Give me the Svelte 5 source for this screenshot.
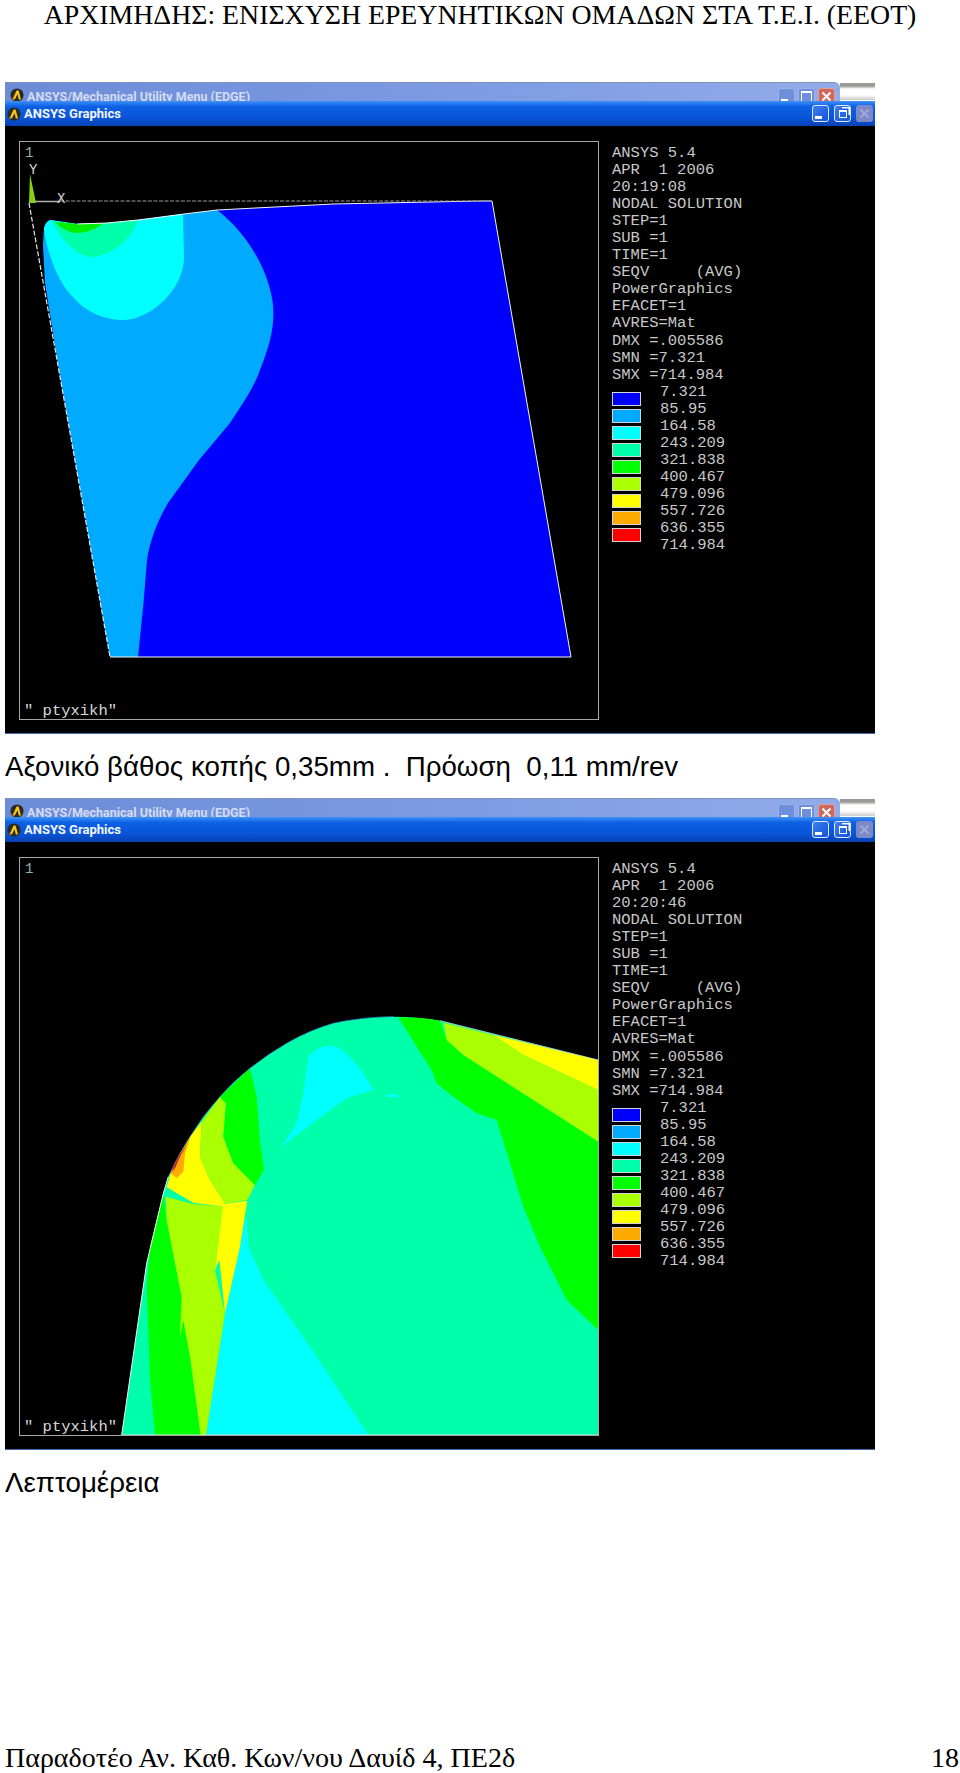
<script>
    const readout = ["STEP=1", "SUB =1", "TIME=1", "SEQV     (AVG)", "PowerGraphics", "EFACET=1", "AVRES=Mat", "DMX =.005586", "SMN =7.321", "SMX =714.984"];
    const labels = ["7.321", "85.95", "164.58", "243.209", "321.838", "400.467", "479.096", "557.726", "636.355", "714.984"];
    const swatches = ["#0000ff", "#00aaff", "#00ffff", "#00ffaa", "#00ff00", "#aaff00", "#ffff00", "#ffaa00", "#ff0000"];

    const windows = [
        { time: "20:19:08", caption: "Αξονικό βάθος κοπής 0,35mm .  Πρόωση  0,11 mm/rev" },
        { time: "20:20:46", caption: "Λεπτομέρεια" },
    ];

    function linesFor(win) {
        return ["ANSYS 5.4", "APR  1 2006", win.time, "NODAL SOLUTION", ...readout];
    }
</script>

{#snippet logo()}
    <svg class="logo" viewBox="0 0 14 14">
        <circle cx="7" cy="7" r="6.6" fill="#2b2a20" />
        <path d="M2.5 11.5 L6.6 2.6 L8.6 2.6 L11 11.5 L8.8 11.5 L7.6 6.2 L4.8 11.5 Z" fill="#f4c81c" />
        <path d="M1.8 9.5 L3.6 9.5 L2.8 12 Z" fill="#c8401c" />
    </svg>
{/snippet}

{#snippet cross()}
    <svg class="cross" viewBox="0 0 11 11">
        <path d="M1.5 1.5 L9.5 9.5 M9.5 1.5 L1.5 9.5" />
    </svg>
{/snippet}

{#snippet firstPlot()}
    <svg class="plot" viewBox="20 142 578 577">
        <path d="M50 220 Q46 221 44 228 L43 245 L45 283 L59 370 L110 657 L571 657 L492 201 L480 201 L333 204 L217 210 L184 214 L138 220 L107 223 L77 224 Z" fill="#0000ff" />
        <path d="M50 220 Q46 221 44 228 L43 245 L45 283 L59 370 L110 657 L138 657 L143.5 603 L147 560 C150 540 158 520 168 503 L199 460 L230 423 C245 400 255 385 260 370 C270 345 275 325 273 305 C270 275 250 235 217 210 L184 214 L138 220 L107 223 L77 224 Z" fill="#00aaff" />
        <path d="M45 237 C50 260 60 285 73 297 C85 312 105 320 123 320 C150 320 184 290 184 257 L183 214 L138 220 L107 223 L77 224 L50 220 Q46 222 44 228 Z" fill="#00ffff" />
        <path d="M52 221 L77 224 L107 223 L138 220 C134 232 127 240 118 247 C108 254 98 257 90 257 C78 255 62 243 52 221 Z" fill="#00ffaa" />
        <path d="M55 222 L77 224 L103 223 C98 228 90 232 78 233 C70 233 60 228 55 222 Z" fill="#00ee00" />
        <path d="M77 224 L107 223 L138 220 L184 214 L217 210 L333 204 L480 201 L492 201 L571 657 L110 657" fill="none" stroke="#f4f4f4" stroke-width="1" />
        <path d="M29 203 L110 657" fill="none" stroke="#e8e8e8" stroke-width="1.2" stroke-dasharray="5 2" />
        <path d="M60 201 L492 201" fill="none" stroke="#9a9a9a" stroke-width="1" stroke-dasharray="4 1.5" />
        <path d="M29 201.5 L60 201.5" stroke="#b0b0b0" stroke-width="1.5" />
        <path d="M30 174 L29 203 L36 203 Z" fill="#86d018" />
        <text class="axis one" x="25" y="157">1</text>
        <text class="axis" x="29" y="174">Y</text>
        <text class="axis" x="57" y="203">X</text>
        <text class="note" x="24" y="715">" ptyxikh"</text>
    </svg>
{/snippet}

{#snippet secondPlot()}
    <svg class="plot" viewBox="-240 -366 1734 1731">
        <path d="M65 1365 L140 850 L190 640 L205 590 Q235 525 270 470 Q310 405 360 350 Q405 300 450 265 Q500 225 560 190 Q630 150 700 130 Q790 110 880 110 Q950 110 1020 122 L1495 240 L1495 1365 Z" fill="#00ffaa" />
        <path d="M895 112 Q960 112 1020 122 L1040 180 L1090 225 L1495 485 L1495 1050 L1400 960 L1320 800 L1270 680 L1190 420 L1130 400 L1060 350 L1010 310 L995 270 L950 200 Z" fill="#00ff00" />
        <path d="M1030 128 L1180 165 L1270 225 L1495 330 L1495 485 L1090 225 L1040 180 Z" fill="#aaff00" />
        <path d="M1180 165 L1495 240 L1495 330 L1270 225 Z" fill="#ffff00" />
        <path d="M545 500 L590 430 L610 340 L625 230 Q670 180 720 205 Q770 240 820 330 L740 355 L650 420 Z" fill="#00ffff" />
        <path d="M850 345 L880 342 L905 350 L870 352 Z" fill="#00ffff" />
        <path d="M440 700 L445 800 L490 900 L560 1000 L650 1130 L805 1365 L318 1365 L375 1000 L420 800 Z" fill="#00ffff" />
        <path d="M190 640 L200 720 L225 850 L245 950 L250 1020 L270 1130 L302 1365 L165 1365 L150 1200 L145 1050 L140 920 L150 800 Z" fill="#00ff00" />
        <path d="M197 650 L280 672 L370 680 L345 870 L375 1000 L318 1365 L302 1365 L270 1130 L250 1020 L240 1070 L245 950 L225 850 L200 720 Z" fill="#aaff00" />
        <path d="M370 672 L442 662 L420 800 L375 1000 L358 840 L345 870 Z" fill="#ffff00" />
        <path d="M200 622 L215 570 Q240 520 270 470 L305 425 L300 530 L330 600 L375 670 L370 680 L280 668 Z" fill="#ffff00" />
        <path d="M305 425 L360 350 L378 370 L370 470 L400 550 L465 615 L442 660 L390 668 L375 670 L330 600 L300 530 Z" fill="#aaff00" />
        <path d="M360 350 L450 265 L470 350 L480 480 L492 570 L465 615 L400 550 L370 470 L378 370 Z" fill="#00ff00" />
        <path d="M272 468 L255 520 L250 575 L230 595 L212 580 L240 520 Z" fill="#ffaa00" />
        <path d="M262 490 L240 530 L225 565 L212 578 L225 545 Z" fill="#d81818" />
        <path d="M65 1365 L140 850 L190 640 L205 590" fill="none" stroke="#f0f0f0" stroke-width="3" />
        <path d="M205 590 Q235 525 270 470 Q310 405 360 350 Q405 300 450 265 Q500 225 560 190 Q630 150 700 130 Q790 110 880 110" fill="none" stroke="#2f8fd0" stroke-width="2" />
        <path d="M1020 122 L1495 240" fill="none" stroke="#e8e8e8" stroke-width="2" />
        <path d="M65 1365 L1495 1365" fill="none" stroke="#bfe8e0" stroke-width="3" />
        <text class="axis one big" x="-225" y="-321">1</text>
        <text class="note big" x="-228" y="1353">" ptyxikh"</text>
    </svg>
{/snippet}

<div class="page">
    <header class="doc-title">ΑΡΧΙΜΗΔΗΣ: ΕΝΙΣΧΥΣΗ ΕΡΕΥΝΗΤΙΚΩΝ ΟΜΑΔΩΝ ΣΤΑ Τ.Ε.Ι. (ΕΕΟΤ)</header>

    {#each windows as win, i}
        <section class="window">
            <div class="back-row">
                <div class="back-bar">
                    {@render logo()}
                    <span class="back-title">ANSYS/Mechanical Utility Menu (EDGE)</span>
                    <span class="btn blue"><i class="min"></i></span>
                    <span class="btn blue"><i class="max"></i></span>
                    <span class="btn red">{@render cross()}</span>
                </div>
                <div class="back-strip"></div>
            </div>
            <div class="front-bar">
                {@render logo()}
                <span class="front-title">ANSYS Graphics</span>
                <span class="btn bright"><i class="min"></i></span>
                <span class="btn bright"><i class="restore"></i></span>
                <span class="btn faded">{@render cross()}</span>
            </div>
            <div class="body">
                <div class="frame">
                    {#if i === 0}
                        {@render firstPlot()}
                    {:else}
                        {@render secondPlot()}
                    {/if}
                </div>
                <div class="side">
                    {#each linesFor(win) as line}
                        <div class="line">{line}</div>
                    {/each}
                    {#each labels as label, n}
                        <div class="legend-row">
                            <span class="swatch-slot">
                                {#if swatches[n]}
                                    <span class="swatch" style="background: {swatches[n]}"></span>
                                {/if}
                            </span>
                            <span>{label}</span>
                        </div>
                    {/each}
                </div>
            </div>
        </section>
        <p class="caption">{win.caption}</p>
    {/each}

    <footer class="doc-footer">
        <span>Παραδοτέο Αν. Καθ. Κων/νου Δαυίδ 4, ΠΕ2δ</span>
        <span>18</span>
    </footer>
</div>

<style>
    :global(body) {
        margin: 0;
        background: #fff;
    }

    .page {
        height: 1773px;
        display: flex;
        flex-direction: column;
        overflow: hidden;
        color: #000;
    }

    .doc-title {
        height: 82px;
        flex: none;
        text-align: center;
        font-family: "Liberation Serif", serif;
        font-size: 27.8px;
        line-height: 30px;
        white-space: nowrap;
    }

    .window {
        width: 870px;
        height: 652px;
        margin-left: 5px;
        background: #000;
        display: flex;
        flex-direction: column;
        flex: none;
        border-bottom: 1px solid #3f68b0;
        box-sizing: border-box;
    }

    .back-row {
        height: 19px;
        flex: none;
        display: flex;
        background: #fff;
    }

    .back-bar {
        flex: 1;
        display: flex;
        align-items: flex-start;
        padding: 5px 5px 0 5px;
        gap: 3px;
        border-top: 1px solid #7f93b8;
        border-top-right-radius: 6px;
        background: linear-gradient(90deg, #6c8cd8, #7f9ce4 60%, #93abe8);
    }

    .back-strip {
        width: 35px;
        height: 17px;
        margin-top: 1px;
        background: linear-gradient(#9a9a98 0 3px, #fff 6px, #fff 12px, #c9c9c5);
    }

    .back-title {
        flex: 1;
        font-family: Roboto, sans-serif;
        font-weight: 700;
        font-size: 12.5px;
        line-height: 17px;
        color: #d3dcf4;
        white-space: nowrap;
    }

    .front-bar {
        height: 25px;
        flex: none;
        position: relative;
        display: flex;
        align-items: center;
        gap: 3px;
        padding: 0 2px 0 2px;
        background: linear-gradient(#3f92f6, #0d60e4 22%, #0a55d8 65%, #0741b4);
    }

    .front-title {
        flex: 1;
        font-family: Roboto, sans-serif;
        font-weight: 700;
        font-size: 13px;
        color: #f2f5ff;
        white-space: nowrap;
    }

    .logo {
        width: 14px;
        height: 14px;
        flex: none;
    }

    .btn {
        width: 17px;
        height: 17px;
        flex: none;
        box-sizing: border-box;
        border-radius: 3px;
        display: flex;
        align-items: center;
        justify-content: center;
    }

    .btn.blue {
        background: #6d8fdc;
        border: 1px solid #9db2ea;
    }
    .btn.red {
        background: #d0695c;
        border: 1px solid #e0a09a;
    }
    .btn.bright {
        background: linear-gradient(135deg, #3f7ff0, #1452d8);
        border: 1px solid #dfe8fb;
        margin-left: 2px;
    }
    .btn.faded {
        background: #7d88c8;
        margin-left: 2px;
    }

    .cross {
        width: 11px;
        height: 11px;
        fill: none;
        stroke: #fff;
        stroke-width: 2;
    }
    .faded .cross {
        stroke: #a3a8d8;
    }

    .min {
        width: 7px;
        height: 3px;
        background: #fff;
        align-self: flex-end;
        margin: 0 auto 2px 2px;
    }
    .max {
        width: 9px;
        height: 8px;
        border: 1px solid #fff;
        border-top-width: 2px;
    }
    .restore {
        width: 6px;
        height: 5px;
        border: 1px solid #fff;
        border-top-width: 2px;
        box-shadow: 2px -2px 0 -0.5px #1f5ae0, 3px -3px 0 0 #fff;
    }

    .body {
        flex: 1;
        display: flex;
        align-items: flex-start;
        padding: 15px 0 0 14px;
    }

    .frame {
        width: 580px;
        height: 579px;
        flex: none;
        box-sizing: border-box;
        border: 1px solid #a8a8a8;
    }

    .plot {
        width: 578px;
        height: 577px;
        display: block;
    }

    .axis,
    .note {
        font-family: "Liberation Mono", monospace;
        font-size: 14px;
        fill: #d8d8d8;
    }
    .note {
        font-size: 15.5px;
    }
    .axis.one {
        fill: #8fb8b0;
    }
    .axis.big {
        font-size: 42px;
    }
    .note.big {
        font-size: 46.5px;
    }

    .side {
        margin: 4px 0 0 13px;
        font-family: "Liberation Mono", monospace;
        font-size: 15.5px;
        line-height: 17.05px;
        color: #c8c8c8;
    }

    .line {
        white-space: pre;
    }

    .legend-row {
        display: flex;
        height: 17.05px;
    }

    .swatch-slot {
        width: 48px;
        flex: none;
    }

    .swatch {
        display: block;
        box-sizing: border-box;
        width: 29px;
        height: 14px;
        margin-top: 8px;
        border: 1px solid #d4d4d4;
    }

    .caption {
        height: 64px;
        margin: 0;
        padding: 17px 0 0 5px;
        box-sizing: border-box;
        flex: none;
        font-family: "Liberation Sans", sans-serif;
        font-size: 27.7px;
        line-height: 32px;
        white-space: pre;
    }

    .doc-footer {
        margin-top: auto;
        padding: 0 1px 0 5px;
        display: flex;
        justify-content: space-between;
        font-family: "Liberation Serif", serif;
        font-size: 28px;
        line-height: 30px;
    }
</style>
